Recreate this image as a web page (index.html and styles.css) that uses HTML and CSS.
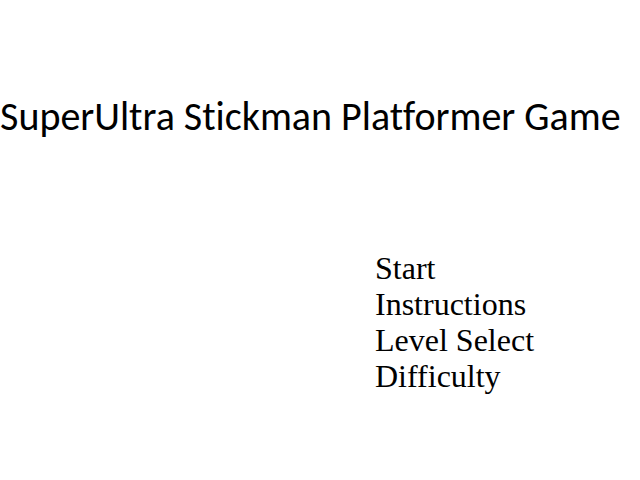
FILE: index.html
```html
<!DOCTYPE html>
<html lang="en">
<head>
<meta charset="utf-8">
<title>SuperUltra Stickman Platformer Game</title>
<link rel="stylesheet" href="styles.css">
</head>
<body>
<main class="title-screen">
<h1 class="title">SuperUltra Stickman Platformer Game</h1>
<nav class="menu" aria-label="Main menu">
<button type="button" class="menu-item">Start</button>
<button type="button" class="menu-item">Instructions</button>
<button type="button" class="menu-item">Level Select</button>
<button type="button" class="menu-item">Difficulty</button>
</nav>
</main>
</body>
</html>
```
FILE: styles.css
```css
body {
  margin: 0;
  background: #fff;
  color: #000;
}

.title-screen {
  display: flex;
  flex-direction: column;
  padding-top: 93px;
}

.title {
  margin: 0;
  font: 400 40px/48px Carlito, Calibri, Lato, sans-serif;
  font-variant-ligatures: none;
  white-space: nowrap;
}

.menu {
  display: flex;
  flex-direction: column;
  align-items: flex-start;
  margin-top: 109px;
  padding-left: 375px;
}

.menu-item {
  padding: 0;
  border: 0;
  background: none;
  color: inherit;
  font: 32px/36px "Liberation Serif", "Times New Roman", serif;
  cursor: pointer;
}
```
